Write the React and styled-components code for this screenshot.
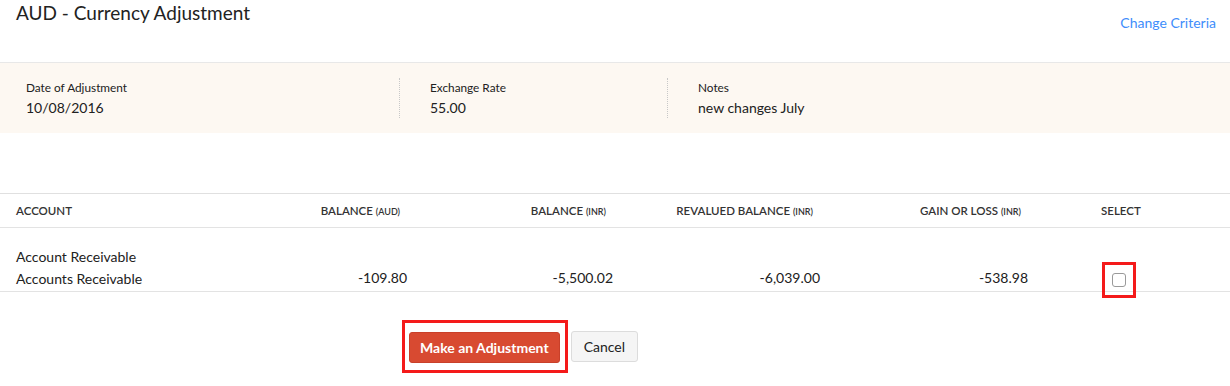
import React from "react";
import styled, {createGlobalStyle} from "styled-components";

const Global = createGlobalStyle`
  body {
    margin: 0;
    background: #fff;
    font-family: "Lato", "Liberation Sans", sans-serif;
    color: #212121;
  }
`;

const Page = styled.div`
  width: 1230px;
  height: 386px;
  overflow: hidden;
`;

const Top = styled.div`
  display: flex;
  justify-content: space-between;
  align-items: flex-start;
  height: 62px;
  padding: 0 14px 0 16px;
  box-sizing: border-box;
`;

const Title = styled.h1`
  margin: 0;
  padding-top: 1px;
  font-size: 19px;
  font-weight: 400;
  line-height: 24px;
  color: #222;
`;

const Link = styled.a`
  margin-top: 14px;
  font-size: 14px;
  color: #408dfb;
  text-decoration: none;
  cursor: pointer;
`;

const Strip = styled.div`
  display: grid;
  grid-template-columns: 399px 268px 1fr;
  height: 70px;
  align-items: center;
  background: #fdf8f2;
  border-top: 1px solid #e8e8e8;
`;

const Info = styled.div`
  padding-left: ${({$pad}) => $pad}px;
  border-left: ${({$sep}) => ($sep ? "1px dotted #c8c8c8" : "none")};
  height: 40px;
  display: flex;
  flex-direction: column;
  justify-content: center;
`;

const Label = styled.div`
  font-size: 11.8px;
  color: #212121;
  line-height: 16px;
`;

const Value = styled.div`
  margin-top: 3px;
  font-size: 14px;
  line-height: 18px;
`;

const Table = styled.div`
  margin-top: 60px;
  border-top: 1px solid #e0e0e0;
`;

const Row = styled.div`
  display: grid;
  grid-template-columns: 208px 207px 206px 207px 208px 1fr;
  grid-template-rows: ${({$h}) => $h - 1}px;
  border-bottom: 1px solid #e3e3e3;
  align-items: ${({$align}) => $align || "center"};
`;

const Head = styled.div`
  font-size: 11.5px;
  font-weight: 600;
  color: #333;
  text-align: ${({$left}) => ($left ? "left" : "right")};
  padding: ${({$left}) => ($left ? "0 0 0 16px" : "0 15px 0 0")};
  small {
    font-size: 9px;
  }
`;

const SelectHead = styled(Head)`
  padding-left: 65px;
`;

const Cell = styled.div`
  font-size: 14px;
  text-align: right;
  padding: 0 8px 4px 0;
  line-height: 18px;
`;

const AccountCell = styled(Cell)`
  text-align: left;
  padding: 0 0 1px 16px;
  line-height: 22px;
`;

const Mark = styled.span`
  display: inline-flex;
  align-items: center;
  justify-content: center;
  border: 3px solid #f41a1a;
  padding: ${({$p}) => $p};
`;

const Box = styled.span`
  width: 12px;
  height: 12px;
  border: 1px solid #9a9a9a;
  border-radius: 3px;
  background: #fff;
`;

const CheckWrap = styled.div`
  padding-left: 66px;
  display: flex;
  align-self: start;
  padding-top: 34px;
`;

const Actions = styled.div`
  display: flex;
  align-items: center;
  gap: 3px;
  padding: 28px 0 0 402px;
`;

const Button = styled.button`
  font-family: inherit;
  font-size: 14px;
  height: 31px;
  border-radius: 3px;
  padding: ${({$primary}) => ($primary ? "0 10px" : "0 12px")};
  cursor: pointer;
  background: ${({$primary}) => ($primary ? "#d84a31" : "#f5f5f5")};
  color: ${({$primary}) => ($primary ? "#fff" : "#222")};
  font-weight: ${({$primary}) => ($primary ? 700 : 400)};
  border: 1px solid ${({$primary}) => ($primary ? "#c9402a" : "#dcdcdc")};
`;

const columns = [
  {label: "BALANCE", unit: "(AUD)"},
  {label: "BALANCE", unit: "(INR)"},
  {label: "REVALUED BALANCE", unit: "(INR)"},
  {label: "GAIN OR LOSS", unit: "(INR)"},
];

const values = ["-109.80", "-5,500.02", "-6,039.00", "-538.98"];

export default function App() {
  return (
    <Page>
      <Global />
      <Top>
        <Title>AUD - Currency Adjustment</Title>
        <Link>Change Criteria</Link>
      </Top>
      <Strip>
        <Info $pad={26}>
          <Label>Date of Adjustment</Label>
          <Value>10/08/2016</Value>
        </Info>
        <Info $pad={30} $sep>
          <Label>Exchange Rate</Label>
          <Value>55.00</Value>
        </Info>
        <Info $pad={30} $sep>
          <Label>Notes</Label>
          <Value>new changes July</Value>
        </Info>
      </Strip>
      <Table>
        <Row $h={34}>
          <Head $left>ACCOUNT</Head>
          {columns.map((c, i) => (
            <Head key={i}>
              {c.label} <small>{c.unit}</small>
            </Head>
          ))}
          <SelectHead $left>SELECT</SelectHead>
        </Row>
        <Row $h={64} $align="end">
          <AccountCell>
            Account Receivable
            <br />
            Accounts Receivable
          </AccountCell>
          {values.map((v) => (
            <Cell key={v}>{v}</Cell>
          ))}
          <CheckWrap>
            <Mark $p="8px 7px 8px 7px">
              <Box />
            </Mark>
          </CheckWrap>
        </Row>
      </Table>
      <Actions>
        <Mark $p="9px 5px 7px 4px">
          <Button $primary>Make an Adjustment</Button>
        </Mark>
        <Button>Cancel</Button>
      </Actions>
    </Page>
  );
}
